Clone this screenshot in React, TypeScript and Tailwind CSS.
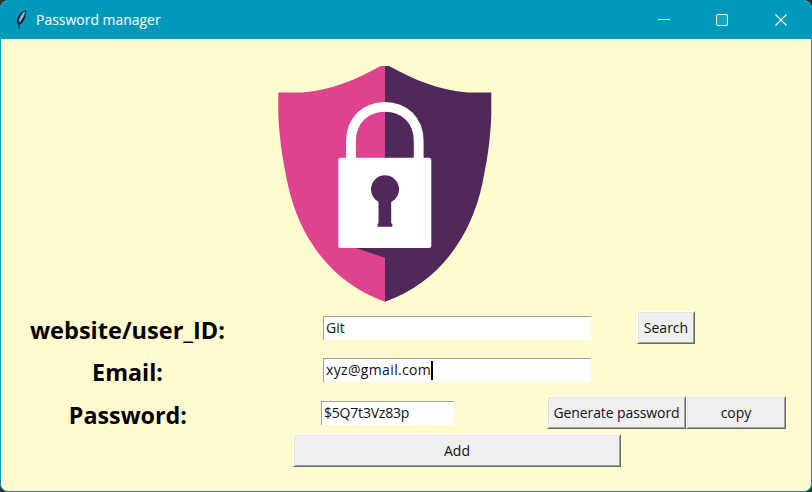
import type { ReactNode } from "react";

function Entry({ className, children }: { className: string; children: ReactNode }) {
  return (
    <div
      className={`flex h-[24px] shrink-0 items-center whitespace-nowrap border-t border-l border-[#a0a0a0] bg-white pl-[2px] text-[14px] leading-none text-[#111] ${className}`}
    >
      {children}
    </div>
  );
}

function Button({ className, children }: { className: string; children: ReactNode }) {
  return (
    <button
      className={`flex h-[33px] shrink-0 items-center justify-center whitespace-nowrap border border-t-white border-l-white border-r-[#696969] border-b-[#696969] bg-[#f0f0f0] text-[14px] leading-none text-[#111] shadow-[inset_1px_1px_0_#e3e3e3,inset_-1px_-1px_0_#a0a0a0] ${className}`}
    >
      {children}
    </button>
  );
}

function Label({ children, scale }: { children: ReactNode; scale: string }) {
  return (
    <div className="flex w-[253px] shrink-0 justify-center whitespace-nowrap pt-[4px] text-[24px] leading-none font-bold text-black">
      <span className={scale}>{children}</span>
    </div>
  );
}

function Feather() {
  return (
    <svg width="12" height="22" viewBox="0 0 12 22" className="shrink-0">
      <path d="M10.6 1.2 C6 2.6 2.2 7 1.8 12 L2.6 15.6 L6.2 15 C9.6 11.5 11.6 5.5 10.6 1.2Z" fill="#17202c" />
      <path d="M9.9 2.4 C6 5 3.7 9 3.4 13.5 C7.3 11 10.2 6 9.9 2.4Z" fill="#6f9cd6" />
      <path d="M9.2 3 L4.3 14.2" stroke="#b7d4ee" strokeWidth=".9" />
      <path d="M4.5 12.5 L3.7 19.5" stroke="#172a35" strokeWidth="1.1" />
    </svg>
  );
}

function Shield() {
  return (
    <svg width="215" height="238" viewBox="277 65 215 238" className="shrink-0">
      <path
        d="M380.7 66 H385 V301.7 C332 283 299 238 287.5 183 C283.8 165 279.5 142 278.3 115 V92.5 H302 C332 90 355 80 380.7 66Z"
        fill="#de438f"
      />
      <path
        d="M389 66 H385 V301.7 C438 283 471 238 482.5 183 C486.2 165 490.5 142 491.3 115 V92.5 H468 C438 90 415 80 389 66Z"
        fill="#50285c"
      />
      <path d="M350 246 L385 257.8 V246Z" fill="#50285c" />
      <path d="M351 160 V141 C351 120 366 106.8 385 106.8 S418.7 120 418.7 141 V160" fill="none" stroke="#fff" strokeWidth="9.8" />
      <rect x="338.3" y="157.7" width="93" height="90.4" rx="2.5" fill="#fff" />
      <circle cx="385" cy="189.3" r="14" fill="#50285c" />
      <path d="M378.5 199 H391.2 V223.3 L392.4 224 V226.7 H377.6 V224 L378.5 223.3Z" fill="#50285c" />
    </svg>
  );
}

export default function App() {
  return (
    <div className="h-[492px] w-[812px] overflow-hidden bg-[#303238] font-['Open_Sans','Noto_Sans',sans-serif]">
      <div className="flex h-full flex-col overflow-hidden rounded-[8px] border border-[#0099bc] bg-[#fffbd0]">
        <header className="flex h-[38px] shrink-0 items-center bg-[#0099bc] text-white">
          <div className="ml-[14px] flex">
            <Feather />
          </div>
          <h1 className="ml-[9px] w-[240px] origin-left scale-x-[0.97] text-[14.4px] leading-none whitespace-nowrap">Password manager</h1>
          <div className="ml-auto flex h-full">
            <div className="flex w-[58px] items-center justify-center">
              <svg width="12" height="12" viewBox="0 0 12 12"><path d="M0 5.5H12" stroke="white" /></svg>
            </div>
            <div className="flex w-[58px] items-center justify-center">
              <svg width="12" height="12" viewBox="0 0 12 12"><rect x=".5" y=".5" width="11" height="11" rx="1" stroke="white" fill="#34adc9" fillOpacity=".6" /></svg>
            </div>
            <div className="flex w-[60px] items-center justify-center">
              <svg width="12" height="12" viewBox="0 0 12 12"><path d="M.5.5L11.5 11.5M11.5.5L.5 11.5" stroke="white" strokeWidth="1.2" /></svg>
            </div>
          </div>
        </header>

        <main className="flex min-h-0 flex-1 flex-col">
          <div className="flex h-[272px] shrink-0 pt-[26px] pl-[276px]">
            <Shield />
          </div>
          <div className="flex h-[33px] shrink-0 items-center">
            <Label scale="scale-x-[0.98]">website/user_ID:</Label>
            <Entry className="ml-[69px] w-[268px]">Git</Entry>
            <Button className="ml-[46px] w-[58px]">Search</Button>
          </div>
          <div className="mt-[9px] flex h-[33px] shrink-0 items-center">
            <Label scale="scale-x-[0.97]">Email:</Label>
            <Entry className="ml-[69px] w-[268px]">
              <span className="tracking-[0.35px]">xyz@gmail.com</span>
              <span className="h-[19px] w-[2px] shrink-0 bg-black" />
            </Entry>
          </div>
          <div className="mt-[10px] flex h-[33px] shrink-0 items-center">
            <Label scale="scale-x-[0.97]">Password:</Label>
            <Entry className="ml-[67px] w-[133px]"><span className="tracking-[-0.2px]">$5Q7t3Vz83p</span></Entry>
            <Button className="ml-[93px] w-[139px]"><span className="tracking-[-0.1px]">Generate password</span></Button>
            <Button className="w-[100px]">copy</Button>
          </div>
          <div className="mt-[5px] flex shrink-0 pl-[292px]">
            <Button className="w-[328px]">Add</Button>
          </div>
        </main>
      </div>
    </div>
  );
}
